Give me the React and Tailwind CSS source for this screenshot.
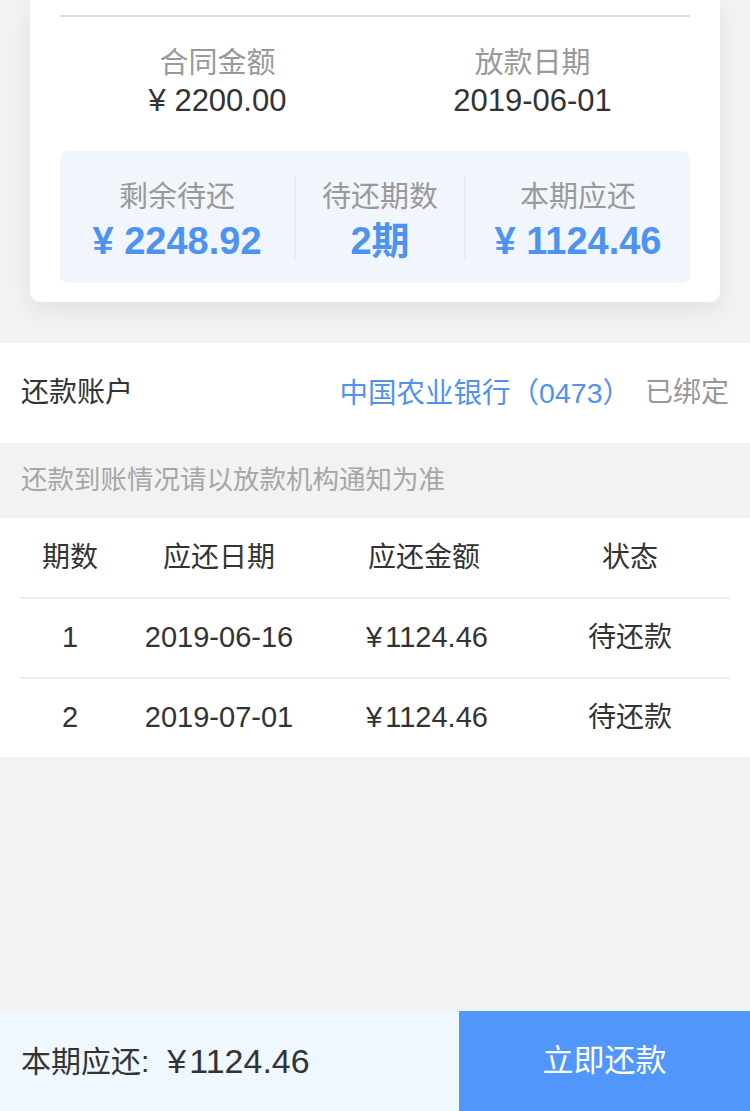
import React from 'react';

const font = { fontFamily: '"Liberation Sans", "Noto Sans CJK SC", sans-serif' };

const schedule = [
  { no: 1, date: '2019-06-16', amount: '1124.46', status: '待还款' },
  { no: 2, date: '2019-07-01', amount: '1124.46', status: '待还款' },
];

const App = () => {
  return (
    <div className="flex flex-col w-[750px] h-[1111px] bg-[#f2f2f2] overflow-hidden" style={font}>
      {/* summary card */}
      <div className="mx-[30px] bg-white rounded-b-[10px] shadow-[0_8px_24px_rgba(0,0,0,0.07)] px-[30px] pt-[15px] pb-[19px]">
        <div className="border-t-2 border-[#dedede]"></div>
        <div className="flex h-[134px] pt-[30px]">
          <div className="flex-1 flex flex-col items-center">
            <p className="text-[29px] leading-[32px] text-[#999]">合同金额</p>
            <p className="text-[31px] leading-[40px] text-[#333] mt-[2px]">¥ 2200.00</p>
          </div>
          <div className="flex-1 flex flex-col items-center">
            <p className="text-[29px] leading-[32px] text-[#999]">放款日期</p>
            <p className="text-[31px] leading-[40px] text-[#333] mt-[2px]">2019-06-01</p>
          </div>
        </div>
        <div className="flex items-center h-[132px] bg-[#f1f5fc] rounded-[8px]">
          <div className="w-[234px] flex flex-col items-center pt-[9px]">
            <p className="text-[29px] leading-[34px] text-[#999]">剩余待还</p>
            <p className="text-[38px] leading-[44px] font-bold text-[#4f93f0] mt-[5px]">¥ 2248.92</p>
          </div>
          <div className="w-[2px] h-[82px] bg-[#e6e9ef]"></div>
          <div className="w-[168px] flex flex-col items-center pt-[9px]">
            <p className="text-[29px] leading-[34px] text-[#999]">待还期数</p>
            <p className="text-[38px] leading-[44px] font-bold text-[#4f93f0] mt-[5px]">2期</p>
          </div>
          <div className="w-[2px] h-[82px] bg-[#e6e9ef]"></div>
          <div className="flex-1 flex flex-col items-center pt-[9px]">
            <p className="text-[29px] leading-[34px] text-[#999]">本期应还</p>
            <p className="text-[38px] leading-[44px] font-bold text-[#4f93f0] mt-[5px]">¥ 1124.46</p>
          </div>
        </div>
      </div>

      {/* account */}
      <div className="mt-[41px] h-[100px] bg-white flex items-center justify-between px-[21px]">
        <span className="text-[28px] text-[#333]">还款账户</span>
        <div className="flex items-center gap-[14px]">
          <span className="text-[28.5px] text-[#4f93f0]">中国农业银行（0473）</span>
          <span className="text-[28px] text-[#999]">已绑定</span>
        </div>
      </div>

      <div className="h-[75px] flex items-center px-[21px]">
        <span className="text-[26.5px] text-[#a6a6a6]">还款到账情况请以放款机构通知为准</span>
      </div>

      {/* schedule table */}
      <div className="bg-white px-[20px]">
        <div className="flex items-center h-[79px] text-[28px] text-[#333]">
          <div className="w-[100px] text-center">期数</div>
          <div className="w-[198px] text-center">应还日期</div>
          <div className="w-[212px] text-center">应还金额</div>
          <div className="flex-1 text-center">状态</div>
        </div>
        {schedule.map((row) => (
          <div key={row.no} className="flex items-center h-[80px] border-t-2 border-[#eeeeee] text-[29px] text-[#333]">
            <div className="w-[100px] text-center">{row.no}</div>
            <div className="w-[198px] text-center">{row.date}</div>
            <div className="w-[212px] text-center pl-[6px]">¥<span className="ml-[3px]">{row.amount}</span></div>
            <div className="flex-1 text-center text-[28px]">{row.status}</div>
          </div>
        ))}
      </div>

      <div className="flex-1"></div>

      {/* bottom bar */}
      <div className="flex h-[100px]">
        <div className="w-[459px] bg-[#eff7ff] flex items-center px-[21px] text-[#333]">
          <span className="text-[30px]">本期应还:</span>
          <span className="text-[34px] ml-[18px]">¥<span className="ml-[3px]">1124.46</span></span>
        </div>
        <button className="flex-1 bg-[#5196fb] flex items-center justify-center">
          <span className="text-[31px] text-white">立即还款</span>
        </button>
      </div>
    </div>
  );
};

export default App;
